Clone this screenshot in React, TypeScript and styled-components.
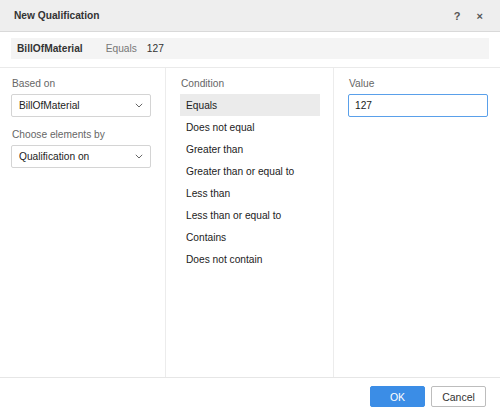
import React from 'react'
import styled, { createGlobalStyle } from 'styled-components'

const GlobalStyle = createGlobalStyle`
  html, body {
    margin: 0;
    padding: 0;
    background: #ffffff;
  }
  * {
    box-sizing: border-box;
  }
`

const Dialog = styled.div`
  width: 500px;
  height: 415px;
  display: flex;
  flex-direction: column;
  background: #ffffff;
  font-family: 'Liberation Sans', Arial, sans-serif;
  font-size: 10.2px;
  color: #222;
  overflow: hidden;
`

const Header = styled.div`
  height: 32px;
  flex: none;
  display: flex;
  align-items: center;
  padding: 0 17px 0 14px;
  background: #eeeeee;
  border-bottom: 1px solid #d9d9d9;
`

const Title = styled.div`
  flex: 1;
  font-weight: bold;
  font-size: 10.2px;
  color: #333;
`

const HeaderButton = styled.span`
  font-weight: bold;
  font-size: 11px;
  color: #555;
  margin-left: 16px;
  cursor: pointer;
`

const Summary = styled.div`
  flex: none;
  height: 21px;
  margin: 6px 11px 8px;
  padding: 0 6px;
  display: flex;
  align-items: center;
  background: #f4f4f4;
`

const SummaryField = styled.span`
  font-weight: bold;
  color: #333;
  margin-right: 23px;
`

const SummaryOp = styled.span`
  color: #777;
  margin-right: 10px;
`

const SummaryValue = styled.span`
  color: #333;
`

const Columns = styled.div`
  flex: 1;
  display: grid;
  grid-template-columns: 166px 168px 1fr;
  border-top: 1px solid #eaeaea;
  border-bottom: 1px solid #e6e6e6;
`

const Column = styled.div<{ $padX: number; $last?: boolean }>`
  display: flex;
  flex-direction: column;
  padding: 9px ${(p) => (p.$last ? 12 : 13)}px 0 ${(p) => p.$padX}px;
  border-right: ${(p) => (p.$last ? 'none' : '1px solid #ececec')};
`

const Label = styled.div<{ $gap?: number }>`
  color: #666;
  line-height: 13px;
  margin-top: ${(p) => p.$gap ?? 0}px;
  margin-bottom: 4px;
  padding-left: 1px;
`

const Select = styled.div`
  width: 140px;
  height: 23px;
  display: flex;
  align-items: center;
  justify-content: space-between;
  padding: 0 7px 0 7px;
  border: 1px solid #d4d4d4;
  border-radius: 2px;
  background: #fff;
  color: #222;
`

const Chevron = () => (
  <svg width="8" height="5" viewBox="0 0 8 5">
    <path d="M0.8 0.8 L4 4 L7.2 0.8" fill="none" stroke="#666" strokeWidth="1" />
  </svg>
)

const ConditionList = styled.div`
  display: flex;
  flex-direction: column;
`

const ConditionItem = styled.div<{ $selected?: boolean }>`
  height: 22px;
  display: flex;
  align-items: center;
  padding-left: 6px;
  background: ${(p) => (p.$selected ? '#ebebeb' : 'transparent')};
  color: #222;
  cursor: pointer;
`

const ValueInput = styled.input`
  width: 140px;
  height: 23px;
  padding: 0 6px;
  border: 1px solid #5aa0ea;
  border-radius: 2px;
  font-family: inherit;
  font-size: 10.2px;
  color: #222;
  outline: none;
`

const Footer = styled.div`
  height: 37px;
  flex: none;
  display: flex;
  align-items: center;
  justify-content: flex-end;
  gap: 6px;
  padding: 0 14px 0 0;
`

const Button = styled.button<{ $primary?: boolean }>`
  width: 55px;
  height: 21px;
  border-radius: 2px;
  font-family: inherit;
  font-size: 10.5px;
  cursor: pointer;
  border: 1px solid ${(p) => (p.$primary ? '#3b8de6' : '#bdbdbd')};
  background: ${(p) => (p.$primary ? '#3b8de6' : '#ffffff')};
  color: ${(p) => (p.$primary ? '#ffffff' : '#333')};
`

const conditions = [
  'Equals',
  'Does not equal',
  'Greater than',
  'Greater than or equal to',
  'Less than',
  'Less than or equal to',
  'Contains',
  'Does not contain',
]

export default function App() {
  return (
    <Dialog>
      <GlobalStyle />
      <Header>
        <Title>New Qualification</Title>
        <HeaderButton>?</HeaderButton>
        <HeaderButton>×</HeaderButton>
      </Header>
      <Summary>
        <SummaryField>BillOfMaterial</SummaryField>
        <SummaryOp>Equals</SummaryOp>
        <SummaryValue>127</SummaryValue>
      </Summary>
      <Columns>
        <Column $padX={11}>
          <Label>Based on</Label>
          <Select>
            BillOfMaterial
            <Chevron />
          </Select>
          <Label $gap={11}>Choose elements by</Label>
          <Select>
            Qualification on
            <Chevron />
          </Select>
        </Column>
        <Column $padX={14}>
          <Label>Condition</Label>
          <ConditionList>
            {conditions.map((c, i) => (
              <ConditionItem key={c} $selected={i === 0}>
                {c}
              </ConditionItem>
            ))}
          </ConditionList>
        </Column>
        <Column $padX={14} $last>
          <Label>Value</Label>
          <ValueInput defaultValue="127" />
        </Column>
      </Columns>
      <Footer>
        <Button $primary>OK</Button>
        <Button>Cancel</Button>
      </Footer>
    </Dialog>
  )
}
